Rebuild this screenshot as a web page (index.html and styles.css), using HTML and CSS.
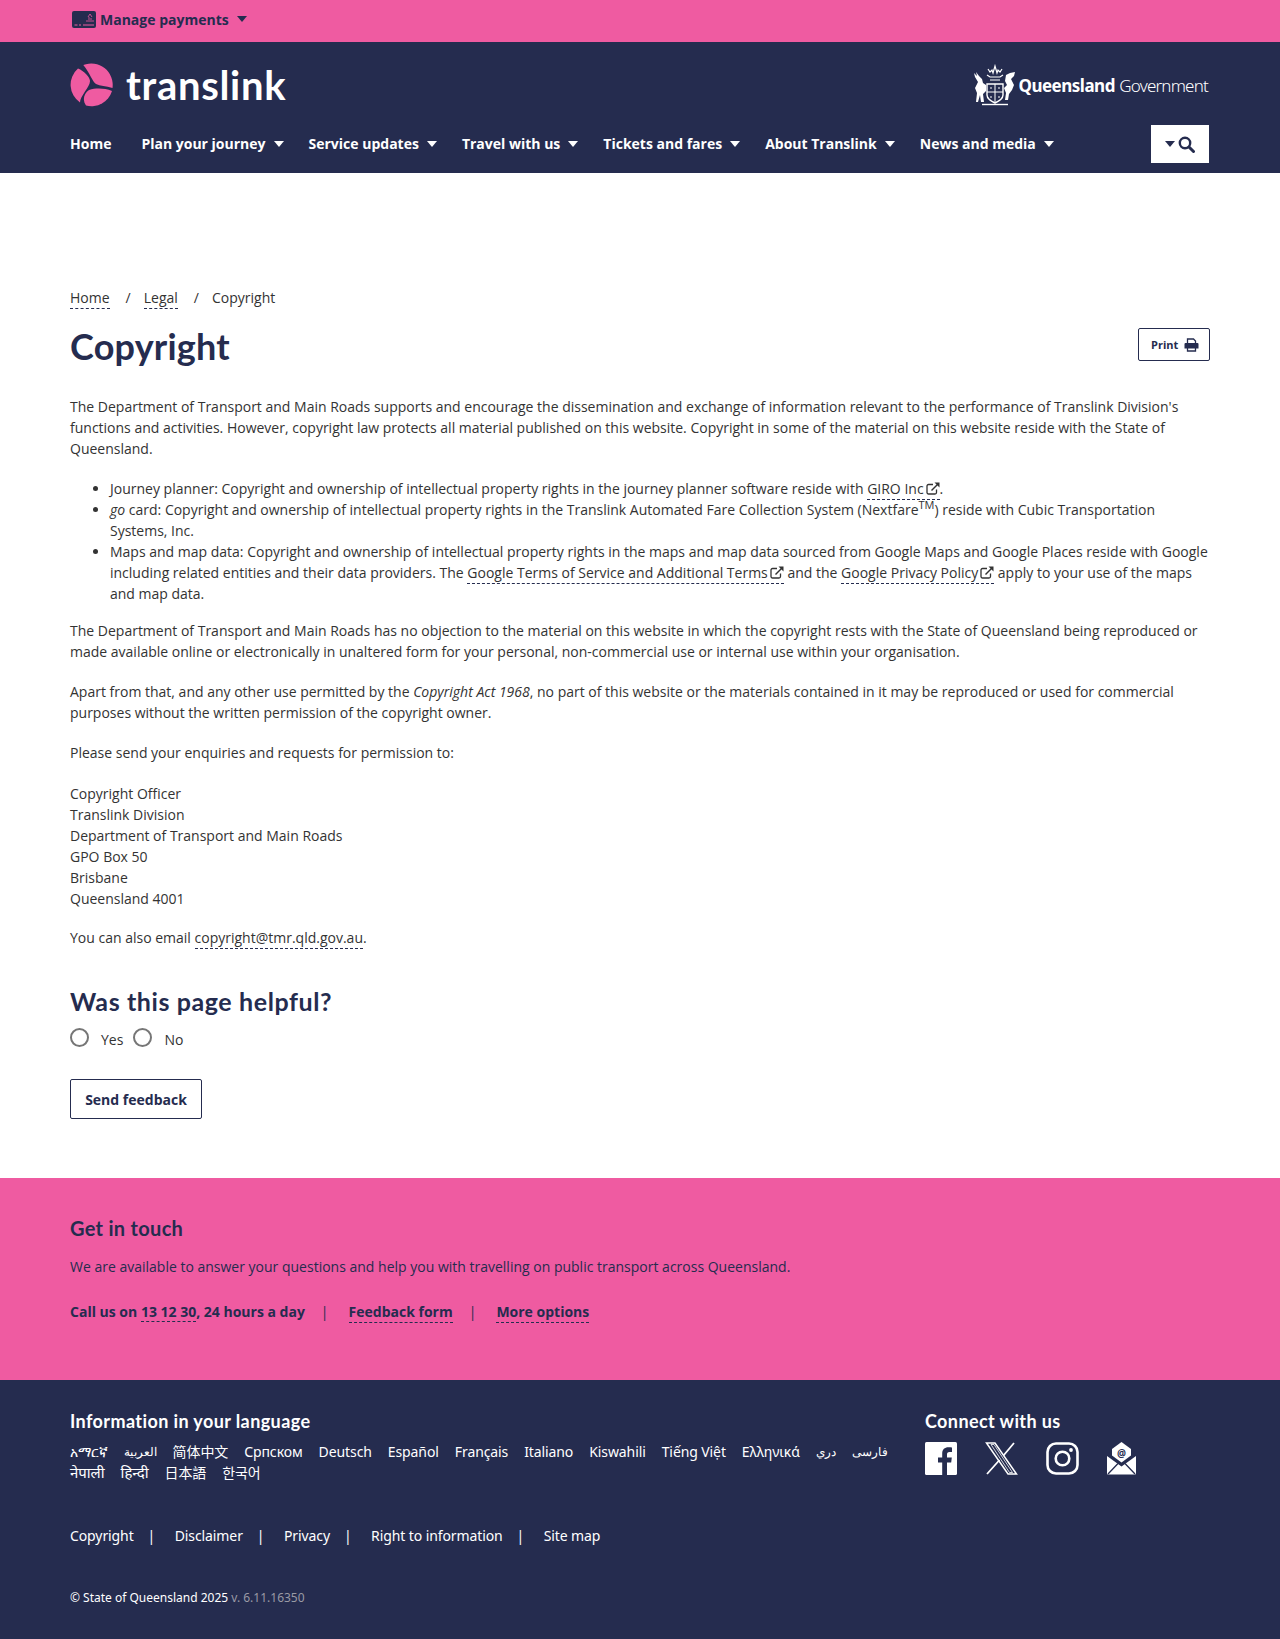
FILE: index.html
```html
<!DOCTYPE html>
<html lang="en">
    <head>
        <title>Copyright</title>
        <link rel="stylesheet" href="styles.css">
    </head>
    <body>
        <div class="top-bar">
            <div class="wrap top-bar-inner">
                <svg class="card-icon" width="24" height="17" viewBox="0 0 24 17">
                    <rect width="24" height="17" rx="2" fill="#252c4f"/>
                    <path d="M2.500 14h3M7 14h2M11 14h11" stroke="#ef5ba1" stroke-width="1"/>
                    <path d="M15 11V9M17 11V6M19 11V7M21 11V9M16 6l2-3 2 3" stroke="#ef5ba1" stroke-width="0.800" fill="none"/>
                </svg>
                <span class="manage">Manage payments</span>
                <span class="caret caret-navy"></span>
            </div>
        </div>

        <header class="site-header">
            <div class="wrap">
                <div class="brand-row">
                    <div class="logo">
                        <svg width="43" height="44" viewBox="0 0 43 44">
                            <g fill="#ef5ba1">
                                <path d="M13.300 2A21.500 21.500 0 0 1 42.500 25C36 23 30 23 26 21C22 18 20 10 13.300 2z"/>
                                <path d="M8 5.500A21.500 21.500 0 0 0 10 39.500C10 33 20 24 20 18C20 14 14 8 8 5.500z"/>
                                <path d="M16 42.500A21.500 21.500 0 0 0 42 28C34 25 26 25 19 27C14 30 12 37 16 42.500z"/>
                            </g>
                        </svg>
                        <span class="logo-text">translink</span>
                    </div>
                    <div class="gov">
                        <svg width="42" height="42" viewBox="0 0 42 42">
                            <g fill="none" stroke="#fff">
                                <path d="M14 5l2 3 2-2 1 3 2-7 2 7 1-3 2 2 2-3M13 11l3 2h10l3-2M16 16h10" stroke-width="1.200"/>
                                <path d="M13 20h16v11c0 4-4 6-8 8-4-2-8-4-8-8z" stroke-width="1.400"/>
                                <path d="M21 20v19M13 28h16M16 24h2M24 24h2M16 33h2M24 33h2" stroke-width="1"/>
                                <path d="M8 40.500h26" stroke-width="1.400"/>
                            </g>
                            <path d="M0 9l3 3-1-4 3 4 3 3 1 4 3 2v6l-3 3 1 8H7l-1-7-2 7H2l1-9-2-5 3-6-3-5zM41 8l-5 1-4 2-1 6 2 4-3 3 2 5-1 7h3l1-6 3-4 2-5-3-6 3-3z" fill="#fff"/>
                        </svg>
                        <span class="gov-text"><b>Queensland</b> <span class="gov-light">Government</span></span>
                    </div>
                </div>
                <nav class="main-nav">
                    <a href="#">Home</a>
                    <a href="#">Plan your journey<span class="caret"></span></a>
                    <a href="#">Service updates<span class="caret"></span></a>
                    <a href="#">Travel with us<span class="caret"></span></a>
                    <a href="#">Tickets and fares<span class="caret"></span></a>
                    <a href="#">About Translink<span class="caret"></span></a>
                    <a href="#">News and media<span class="caret"></span></a>
                    <button type="button" class="search-btn">
                        <span class="caret caret-navy"></span>
                        <svg width="17" height="17" viewBox="0 0 17 17">
                            <circle cx="7" cy="7" r="5.200" fill="none" stroke="#252c4f" stroke-width="2.400"/>
                            <path d="M11 11l4.500 4.500" stroke="#252c4f" stroke-width="3" stroke-linecap="round"/>
                        </svg>
                    </button>
                </nav>
            </div>
        </header>

        <main class="wrap content">
            <div class="breadcrumb">
                <a href="#">Home</a><span>/</span><a href="#">Legal</a><span>/</span>Copyright
            </div>
            <div class="title-row">
                <h1>Copyright</h1>
                <button type="button" class="print-btn">
                    Print
                    <svg width="15" height="14" viewBox="0 0 15 14">
                        <path d="M3.500 5V1h6l2 2v2M3.500 10v3h8v-3" fill="none" stroke="#252c4f" stroke-width="1.300"/>
                        <path d="M1.500 5h12a1 1 0 0 1 1 1v4.500h-14V6a1 1 0 0 1 1-1z" fill="#252c4f"/>
                    </svg>
                </button>
            </div>

            <p>The Department of Transport and Main Roads supports and encourage the dissemination and exchange of information relevant to the performance of Translink Division's functions and activities. However, copyright law protects all material published on this website. Copyright in some of the material on this website reside with the State of Queensland.</p>
            <ul>
                <li>Journey planner: Copyright and ownership of intellectual property rights in the journey planner software reside with <a href="#">GIRO Inc<svg class="ext" width="14" height="13" viewBox="0 0 14 13"><use href="#ext-icon"/></svg></a>.</li>
                <li><em>go</em> card: Copyright and ownership of intellectual property rights in the Translink Automated Fare Collection System (Nextfare<sup>TM</sup>) reside with Cubic Transportation Systems, Inc.</li>
                <li>Maps and map data: Copyright and ownership of intellectual property rights in the maps and map data sourced from Google Maps and Google Places reside with Google including related entities and their data providers. The <a href="#">Google Terms of Service and Additional Terms<svg class="ext" width="14" height="13" viewBox="0 0 14 13"><use href="#ext-icon"/></svg></a> and the <a href="#">Google Privacy Policy<svg class="ext" width="14" height="13" viewBox="0 0 14 13"><use href="#ext-icon"/></svg></a> apply to your use of the maps and map data.</li>
            </ul>
            <p>The Department of Transport and Main Roads has no objection to the material on this website in which the copyright rests with the State of Queensland being reproduced or made available online or electronically in unaltered form for your personal, non-commercial use or internal use within your organisation.</p>
            <p>Apart from that, and any other use permitted by the <em>Copyright Act 1968</em>, no part of this website or the materials contained in it may be reproduced or used for commercial purposes without the written permission of the copyright owner.</p>
            <p>Please send your enquiries and requests for permission to:</p>
            <p class="address">Copyright Officer<br>Translink Division<br>Department of Transport and Main Roads<br>GPO Box 50<br>Brisbane<br>Queensland 4001</p>
            <p>You can also email <a href="#">copyright@tmr.qld.gov.au</a>.</p>

            <h2>Was this page helpful?</h2>
            <div class="helpful">
                <span class="radio"></span><span class="radio-label">Yes</span>
                <span class="radio"></span><span class="radio-label">No</span>
            </div>
            <button type="button" class="feedback-btn">Send feedback</button>
        </main>

        <section class="touch">
            <div class="wrap">
                <h3>Get in touch</h3>
                <p>We are available to answer your questions and help you with travelling on public transport across Queensland.</p>
                <div class="touch-links">
                    <span>Call us on <a href="#">13 12 30</a>, 24 hours a day</span>
                    <i>|</i>
                    <a href="#">Feedback form</a>
                    <i>|</i>
                    <a href="#">More options</a>
                </div>
            </div>
        </section>

        <footer class="site-footer">
            <div class="wrap">
                <div class="footer-top">
                    <div class="langs">
                        <h4>Information in your language</h4>
                        <div class="lang-list">
                            <a href="#">አማርኛ</a><a href="#" class="small-lang">العربية</a><a href="#">简体中文</a><a href="#">Српском</a><a href="#">Deutsch</a><a href="#">Español</a><a href="#">Français</a><a href="#">Italiano</a><a href="#">Kiswahili</a><a href="#">Tiếng Việt</a><a href="#">Ελληνικά</a><a href="#" class="small-lang">دري</a><a href="#" class="small-lang">فارسی</a><a href="#" class="big-lang">नेपाली</a><a href="#" class="big-lang">हिन्दी</a><a href="#">日本語</a><a href="#">한국어</a>
                        </div>
                    </div>
                    <div class="connect">
                        <h4>Connect with us</h4>
                        <div class="socials">
                            <svg width="32" height="33" viewBox="0 0 32 33">
                                <rect width="32" height="33" rx="1.500" fill="#fff"/>
                                <path d="M22 33V20.500h4.200l.6-5H22v-3c0-1.500.5-2.500 2.500-2.500H27V5.500c-.5 0-2-.2-3.600-.2-3.700 0-6.200 2.200-6.200 6.300v3.900H13v5h4.200V33z" fill="#252c4f"/>
                            </svg>
                            <svg width="33" height="33" viewBox="0 0 33 33">
                                <path d="M1.500 1h8.500l21.500 31H23z" fill="none" stroke="#fff" stroke-width="1.500"/>
                                <path d="M6 2.500h3l18.500 28h-3z" fill="none" stroke="#fff" stroke-width="0.800"/>
                                <path d="M29 1L18.500 13.500M14.500 18L2 32" stroke="#fff" stroke-width="1.800"/>
                            </svg>
                            <svg width="33" height="33" viewBox="0 0 33 33">
                                <rect x="1.500" y="1.500" width="30" height="30" rx="8.500" fill="none" stroke="#fff" stroke-width="2.600"/>
                                <circle cx="16.500" cy="16.500" r="6.800" fill="none" stroke="#fff" stroke-width="2.600"/>
                                <circle cx="25" cy="8" r="1.900" fill="#fff"/>
                            </svg>
                            <svg width="29" height="33" viewBox="0 0 29 33">
                                <path d="M14.500 0L24 7v6.500l-9.500 7-9.500-7V7z" fill="#fff"/>
                                <path d="M0 14l14.500 10.500L29 14v17.500a1 1 0 0 1-1 1H1a1 1 0 0 1-1-1z" fill="#fff"/>
                                <path d="M1 32l10-10.500M28 32L18 21.500" stroke="#252c4f" stroke-width="1.300"/>
                                <text x="14.500" y="15" text-anchor="middle" class="mail-at">@</text>
                            </svg>
                        </div>
                    </div>
                </div>
                <div class="legal-links">
                    <a href="#">Copyright</a><i>|</i>
                    <a href="#">Disclaimer</a><i>|</i>
                    <a href="#">Privacy</a><i>|</i>
                    <a href="#">Right to information</a><i>|</i>
                    <a href="#">Site map</a>
                </div>
                <div class="copyright-line">© State of Queensland 2025 <span>v. 6.11.16350</span></div>
            </div>
        </footer>

        <svg width="0" height="0" class="icon-defs">
            <symbol id="ext-icon" viewBox="0 0 14 13">
                <path d="M10.500 7.500v3a1.500 1.500 0 0 1-1.500 1.500H2.500A1.500 1.500 0 0 1 1 10.500V4a1.500 1.500 0 0 1 1.500-1.500H7" fill="none" stroke="#333" stroke-width="1.300"/>
                <path d="M5.500 8.500L12 2" stroke="#333" stroke-width="1.500"/>
                <path d="M8.500 0.500h5v5z" fill="#333"/>
            </symbol>
        </svg>
    </body>
</html>
```

FILE: styles.css
```css
*{
    box-sizing: border-box;
}
body{
    margin: 0;
    font-family: "Open Sans", sans-serif;
    font-size: 14px;
    line-height: 21px;
    color: #333;
    background-color: white;
}
.wrap{
    width: 1140px;
    margin-left: 70px;
}
a{
    color: inherit;
    text-decoration: none;
}
.icon-defs{
    position: absolute;
}

/* top pink bar */
.top-bar{
    height: 42px;
    background-color: #ef5ba1;
}
.top-bar-inner{
    display: flex;
    align-items: center;
    height: 38px;
    padding-left: 2px;
}
.card-icon{
    margin-right: 4px;
}
.manage{
    font-weight: 700;
    font-size: 14px;
    color: #252c4f;
}
.caret{
    display: inline-block;
    width: 0;
    height: 0;
    margin-left: 8px;
    border-left: 5.5px solid transparent;
    border-right: 5.5px solid transparent;
    border-top: 6px solid white;
    vertical-align: 2px;
}
.caret-navy{
    border-top-color: #252c4f;
}

/* header */
.site-header{
    height: 131px;
    background-color: #252c4f;
}
.brand-row{
    display: flex;
    justify-content: space-between;
    align-items: center;
    height: 79px;
    padding-top: 7px;
}
.logo{
    display: flex;
    align-items: center;
    gap: 13px;
}
.logo-text{
    font-family: "Lato", sans-serif;
    font-weight: 700;
    font-size: 40px;
    line-height: 44px;
    letter-spacing: 0.7px;
    color: white;
}
.gov{
    display: flex;
    align-items: center;
    gap: 2px;
    margin-right: 2px;
    color: white;
}
.gov-text{
    font-size: 17px;
    font-family: "Noto Sans", sans-serif;
}
.gov-text b{
    letter-spacing: -0.5px;
}
.gov-light{
    font-weight: 300;
    letter-spacing: -0.8px;
}
.main-nav{
    display: flex;
    align-items: center;
    height: 38px;
    margin-top: 3px;
    gap: 25px;
}
.main-nav a{
    color: white;
    font-weight: 700;
    font-size: 14px;
}
.main-nav a:first-child{
    margin-right: 5px;
}
.search-btn{
    display: flex;
    align-items: center;
    justify-content: center;
    width: 58px;
    height: 38px;
    margin-top: 2px;
    margin-left: auto;
    margin-right: 1px;
    border: none;
    background-color: white;
    gap: 3px;
}
.search-btn .caret{
    margin-left: 0;
}

/* main content */
.content{
    padding-top: 113px;
    padding-bottom: 59px;
}
.breadcrumb{
    height: 21px;
    font-size: 14px;
    margin-top: 1px;
}
.breadcrumb a, .content p a, .content li a{
    padding-bottom: 1px;
    border-bottom: 1px dashed #252c4f;
}
.breadcrumb span{
    margin: 0 13px 0 16px;
}
.title-row{
    display: flex;
    justify-content: space-between;
    align-items: flex-start;
    margin-top: 8px;
    margin-bottom: 25px;
}
h1{
    margin: 5px 0 0 0;
    font-family: "Lato", sans-serif;
    font-weight: 700;
    font-size: 36px;
    line-height: 50px;
    letter-spacing: 0.2px;
    color: #252c4f;
}
.print-btn{
    display: flex;
    align-items: center;
    gap: 6px;
    width: 72px;
    height: 33px;
    margin-top: 12px;
    padding: 0 0 0 12px;
    border: 1px solid #252c4f;
    border-radius: 2px;
    background-color: white;
    font-family: "Open Sans", sans-serif;
    font-weight: 700;
    font-size: 11px;
    color: #252c4f;
}
p{
    margin: 0 0 19px 0;
}
.address{
    margin-top: 20px;
    margin-bottom: 18px;
}
ul{
    margin: 0 0 16px 0;
    padding-left: 40px;
}
sup{
    font-size: 11px;
    line-height: 0;
}
.ext{
    margin-left: 2px;
    vertical-align: -1px;
}
h2{
    margin: 35px 0 0 0;
    font-family: "Lato", sans-serif;
    font-weight: 700;
    font-size: 25px;
    line-height: 36px;
    letter-spacing: 0.6px;
    color: #252c4f;
}
.helpful{
    display: flex;
    align-items: center;
    height: 24px;
    margin-top: 8px;
}
.radio{
    width: 19px;
    height: 19px;
    border: 2px solid #767676;
    border-radius: 50%;
    margin-top: -3px;
}
.radio-label{
    margin-left: 12px;
    margin-right: 10px;
}
.feedback-btn{
    display: block;
    width: 132px;
    height: 40px;
    margin-top: 28px;
    border: 1px solid #252c4f;
    border-radius: 2px;
    background-color: white;
    font-family: "Open Sans", sans-serif;
    font-weight: 700;
    font-size: 14px;
    color: #252c4f;
}

/* get in touch */
.touch{
    height: 202px;
    padding-top: 37px;
    background-color: #ef5ba1;
    color: #252c4f;
}
.touch h3{
    margin: 0;
    font-family: "Lato", sans-serif;
    font-weight: 700;
    font-size: 20px;
    line-height: 26px;
    letter-spacing: 0.3px;
}
.touch p{
    margin: 15px 0 0 0;
}
.touch-links{
    display: flex;
    margin-top: 24px;
    font-weight: 700;
    gap: 18px;
}
.touch-links i{
    margin-left: -2px;
    margin-right: 2px;
    font-style: normal;
    font-weight: 400;
}
.touch-links a{
    padding-bottom: 0;
    border-bottom: 1px dashed #252c4f;
}

/* footer */
.site-footer{
    height: 259px;
    padding-top: 30px;
    background-color: #252c4f;
    color: white;
}
.footer-top{
    display: flex;
    justify-content: space-between;
    height: 115px;
}
.langs{
    width: 825px;
}
.connect{
    width: 285px;
}
h4{
    margin: 0;
    font-family: "Lato", sans-serif;
    font-weight: 700;
    font-size: 18px;
    line-height: 22px;
    letter-spacing: 0.4px;
}
.lang-list{
    display: flex;
    flex-wrap: wrap;
    margin-top: 9px;
    gap: 0 16px;
    letter-spacing: -0.1px;
    font-family: "Noto Sans", "Noto Sans CJK SC", sans-serif;
}
.small-lang{
    font-size: 12px;
}
.big-lang{
    font-size: 15px;
}
.socials{
    display: flex;
    align-items: flex-start;
    gap: 28px;
    margin-top: 10px;
}
.mail-at{
    font-size: 10px;
    font-weight: 700;
    fill: #252c4f;
}
.legal-links{
    display: flex;
    gap: 14px;
    letter-spacing: -0.1px;
    font-family: "Noto Sans", sans-serif;
}
.legal-links i{
    font-style: normal;
    margin-right: 5.500px;
}
.copyright-line{
    margin-top: 41px;
    font-size: 12px;
    font-family: "Noto Sans", sans-serif;
}
.copyright-line span{
    color: #9a9aa5;
}
```
